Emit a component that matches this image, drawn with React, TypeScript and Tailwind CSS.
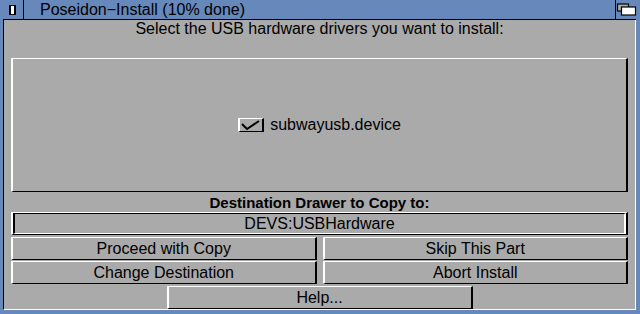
import React from 'react';

const font = { fontFamily: '"Liberation Sans", Arial, Helvetica, sans-serif' };

function Raised({ className = '', children }: { className?: string; children?: React.ReactNode }) {
  return (
    <div
      className={`border-l-2 border-t border-r-2 border-b border-l-white border-t-white border-r-black border-b-black bg-[#aaaaaa] ${className}`}
    >
      {children}
    </div>
  );
}

function Button({ label, className = '' }: { label: string; className?: string }) {
  return (
    <Raised className={`h-[23px] flex items-center justify-center ${className}`}>
      <span className="text-[16px] leading-[21px] text-black">{label}</span>
    </Raised>
  );
}

function DepthGadget() {
  return (
    <svg width="23" height="19" viewBox="0 0 23 19">
      <rect x="1.5" y="4" width="11" height="7" fill="#aaaaaa" stroke="#000" strokeWidth="1.2" />
      <rect x="5.5" y="7" width="14" height="8" fill="#fff" stroke="#000" strokeWidth="1.2" />
    </svg>
  );
}

export default function App() {
  return (
    <div className="w-[640px] h-[314px] flex flex-col bg-[#6688bb] overflow-hidden" style={font}>
      {/* title bar */}
      <div className="h-[19px] flex items-stretch flex-shrink-0">
        <div className="w-[23px] flex items-center justify-start pl-[9px]">
          <div className="w-[7px] h-[10px] border-l-2 border-r-2 border-y border-black bg-white" />
        </div>
        <div className="w-px bg-black" />
        <div className="flex-1 pl-[16px] text-[16px] leading-[19px] text-black">Poseidon−Install (10% done)</div>
        <div className="w-px bg-black" />
        <div className="w-[24px] flex items-center">
          <DepthGadget />
        </div>
      </div>

      {/* window body */}
      <div className="flex-1 flex flex-col pl-[3px] pr-[4px] pb-[4px]">
        <div className="h-px bg-black ml-0" />
        <div className="flex-1 flex flex-col bg-[#aaaaaa] border-l border-l-black border-r border-r-white border-b border-b-white px-[7px]">
          <div className="h-[18px] text-center text-[16px] leading-[18px] text-black">
            Select the USB hardware drivers you want to install:
          </div>

          <Raised className="mt-[20px] h-[134px] flex items-center justify-center gap-[6px]">
            <div className="w-[26px] h-[14px] border-l-2 border-t border-r-2 border-b border-l-white border-t-white border-r-black border-b-black flex items-center justify-center">
              <svg width="22" height="12" viewBox="0 0 22 12">
                <polyline points="2,5 7,10 19,2" fill="none" stroke="#000" strokeWidth="2" />
              </svg>
            </div>
            <span className="text-[16px] leading-[18px] text-black">subwayusb.device</span>
          </Raised>

          <div className="mt-[2px] h-[18px] text-center text-[15px] leading-[18px] font-bold text-black">
            Destination Drawer to Copy to:
          </div>

          <Raised className="h-[23px]">
            <div className="h-full border-l-2 border-t border-r-2 border-b border-l-black border-t-black border-r-white border-b-white flex items-center justify-center">
              <span className="text-[16px] leading-[19px] text-black">DEVS:USBHardware</span>
            </div>
          </Raised>

          <div className="mt-[2px] grid grid-cols-2 gap-x-[6px] gap-y-px">
            <Button label="Proceed with Copy" />
            <Button label="Skip This Part" />
            <Button label="Change Destination" />
            <Button label="Abort Install" />
          </div>

          <Button label="Help..." className="mt-[2px] w-[306px] mx-auto" />
        </div>
      </div>
    </div>
  );
}
